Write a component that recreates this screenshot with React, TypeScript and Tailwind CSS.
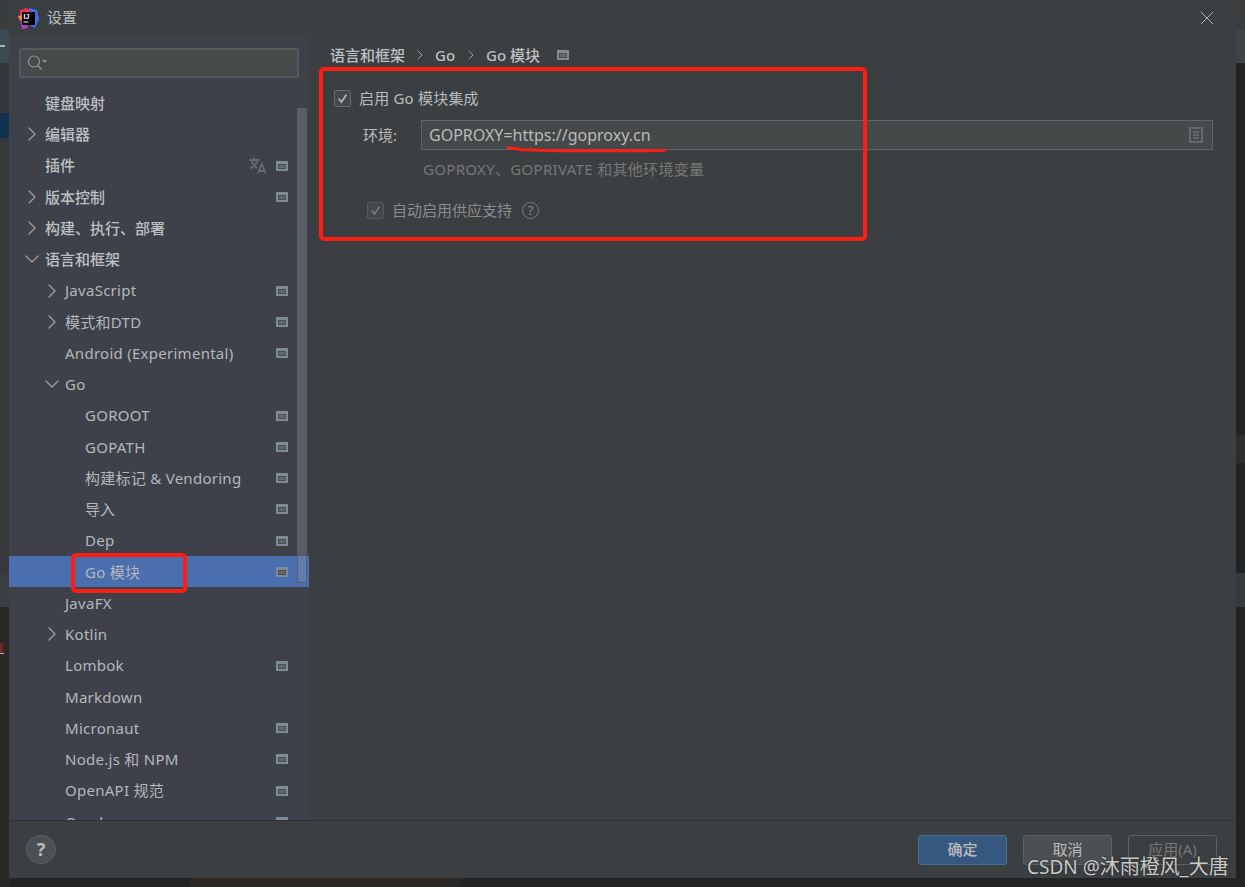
import React from "react";
import { ChevronRight, ChevronDown, X } from "lucide-react";

const font = { fontFamily: '"Noto Sans","Noto Sans CJK SC",sans-serif' };

function PageIcon() {
  return (
    <svg width="12" height="10" viewBox="0 0 12 10" className="shrink-0">
      <rect width="12" height="10" fill="#7f8b94" />
      <rect x="2" y="3" width="8" height="5" fill="#4a4e55" />
      <rect x="3" y="4" width="6" height="3" fill="#5f6970" />
    </svg>
  );
}

type Row = { t: string; level: number; arrow?: "r" | "d"; icon?: boolean; strong?: boolean; sel?: boolean; tr?: boolean };
const rows: Row[] = [
  { t: "键盘映射", level: 0, strong: true },
  { t: "编辑器", level: 0, arrow: "r", strong: true },
  { t: "插件", level: 0, icon: true, strong: true, tr: true },
  { t: "版本控制", level: 0, arrow: "r", icon: true, strong: true },
  { t: "构建、执行、部署", level: 0, arrow: "r", strong: true },
  { t: "语言和框架", level: 0, arrow: "d", strong: true },
  { t: "JavaScript", level: 1, arrow: "r", icon: true },
  { t: "模式和DTD", level: 1, arrow: "r", icon: true },
  { t: "Android (Experimental)", level: 1, icon: true },
  { t: "Go", level: 1, arrow: "d" },
  { t: "GOROOT", level: 2, icon: true },
  { t: "GOPATH", level: 2, icon: true },
  { t: "构建标记 & Vendoring", level: 2, icon: true },
  { t: "导入", level: 2, icon: true },
  { t: "Dep", level: 2, icon: true },
  { t: "Go 模块", level: 2, icon: true, sel: true },
  { t: "JavaFX", level: 1 },
  { t: "Kotlin", level: 1, arrow: "r" },
  { t: "Lombok", level: 1, icon: true },
  { t: "Markdown", level: 1 },
  { t: "Micronaut", level: 1, icon: true },
  { t: "Node.js 和 NPM", level: 1, icon: true },
  { t: "OpenAPI 规范", level: 1, icon: true },
  { t: "Oracle", level: 1, icon: true },
];

const indent = ["pl-[36px]", "pl-[56px]", "pl-[76px]"];
const arrowPos = ["left-[11px]", "left-[31px]", "left-[51px]"];

function TreeRow({ r }: { r: Row }) {
  const hasLatin = /[A-Za-z]/.test(r.t);
  return (
    <div
      className={`relative flex h-[31.25px] shrink-0 items-center pr-[21px] text-[15px] ${indent[r.level]} ${
        r.sel ? "bg-[#4b6eaf]" : ""
      } ${r.strong ? "font-medium text-[#bcc0c4]" : "text-[#b4b8bc]"} ${hasLatin ? "tracking-[0.27px]" : ""}`}
    >
      {r.arrow === "r" && <ChevronRight size={24} strokeWidth={1.2} className={`absolute text-[#a0a4a8] ${arrowPos[r.level]}`} />}
      {r.arrow === "d" && <ChevronDown size={24} strokeWidth={1.2} className={`absolute text-[#a0a4a8] ${arrowPos[r.level]}`} />}
      <span className="flex-1 whitespace-nowrap">{r.t}</span>
      {r.tr && (
        <svg width="18" height="17" viewBox="0 0 18 17" className="mr-[9px] shrink-0" fill="none" stroke="#646a72" strokeWidth="1.8">
          <path d="M0.5 3h10M5 .5V3M8.5 3C7.5 7 4.5 10 .8 11.5M2.5 3.5c1 3 3 6 5.5 7.5" />
          <path d="M9 16.5 12.8 7l3.9 9.5M10 14h5.5" />
        </svg>
      )}
      {r.icon && <PageIcon />}
    </div>
  );
}

function Logo() {
  return (
    <svg width="21" height="21" viewBox="0 0 21 21" className="mt-[2px] shrink-0">
      <path d="M2 2 9 0l4 4-6 6-5-1z" fill="#fe2857" />
      <path d="M11 0l8 2 2 9-4 9-6-3z" fill="#3b6fe8" />
      <path d="M0 8l4-1 1 5-3 1z" fill="#ff8a1c" />
      <path d="M2 12l5-2 3 10-6 1z" fill="#b53dc6" />
      <rect x="4" y="4" width="13" height="13" fill="#000" />
      <text x="5.5" y="10.5" fill="#fff" fontSize="7" fontWeight="700" fontFamily="Liberation Sans">IJ</text>
      <rect x="5.5" y="13.5" width="5" height="1" fill="#fff" />
    </svg>
  );
}

function Check({ disabled }: { disabled?: boolean }) {
  return (
    <span
      className={`flex h-[17px] w-[17px] shrink-0 items-center justify-center rounded-[2px] border ${
        disabled ? "border-[#565a5c] bg-[#45484a]" : "border-[#6b6b6b] bg-[#43494a]"
      }`}
    >
      <svg width="11" height="11" viewBox="0 0 11 11" fill="none" stroke={disabled ? "#777" : "#b4b4b4"} strokeWidth="1.8">
        <path d="M1.5 5.5 4.5 9 9.5 1.5" />
      </svg>
    </span>
  );
}

function Sep() {
  return <ChevronRight size={16} strokeWidth={1.5} className="text-[#a0a4a8]" />;
}

export default function App() {
  return (
    <div className="relative flex h-[887px] w-[1245px] overflow-hidden bg-[#212325]" style={font}>
      {/* left strip of the IDE behind the dialog */}
      <div className="flex w-[9px] shrink-0 flex-col">
        <div className="h-[29px] bg-[#3a3c3e]" />
        <div className="flex h-[34px] items-center bg-[#3c4a55]">
          <div className="h-[2px] w-[5px] bg-[#b0b4b8]" />
        </div>
        <div className="h-[50px] bg-[#35373a]" />
        <div className="h-[25px] bg-[#10324f]" />
        <div className="h-[435px] bg-[#36383a]" />
        <div className="h-[34px] bg-[#3c3f41]" />
        <div className="h-[280px] bg-[#2b2926] pt-[36px]">
          <div className="h-[10px] w-[3px] bg-[#7a2420]" />
          <div className="h-[1px] w-[4px] bg-[#b0b0b0]" />
        </div>
      </div>

      <div className="flex w-[1227px] shrink-0 flex-col">
        <div className="flex h-[878px] flex-col bg-[#3c3f41]">
          <div className="flex h-[35px] shrink-0 items-center pl-[9px] pr-[17px] text-[#bbbbbb]">
            <Logo />
            <span className="ml-[8px] flex-1 text-[15px]">设置</span>
            <X size={24} strokeWidth={1} className="text-[#b0b0b0]" />
          </div>

          <div className="flex min-h-0 flex-1">
            <aside className="relative flex w-[300px] shrink-0 flex-col overflow-hidden bg-[#3e4149]">
              <div className="mx-[10px] mb-[9.4px] mt-[13px] flex h-[30px] shrink-0 items-center rounded-[3px] border-2 border-[#565a5c] bg-[#474a4a] pl-[6px]">
                <svg width="20" height="16" viewBox="0 0 20 16" fill="none" stroke="#8f9396" strokeWidth="1.2">
                  <circle cx="7" cy="6.5" r="5.5" />
                  <path d="M11 10.5 14.5 14.5" />
                  <path d="M15 5h5l-2.5 3z" fill="#8f9396" stroke="none" />
                </svg>
              </div>
              <div className="flex min-h-0 flex-1 flex-col overflow-hidden">
                {rows.map((r) => (
                  <TreeRow key={r.t} r={r} />
                ))}
              </div>
              {/* overlay scrollbar */}
              <div className="absolute left-[288px] top-[73px] h-[475px] w-[10px] border border-[#5a5d66] bg-[#9aa0aa]/30" />
            </aside>

            <main className="min-w-0 flex-1 pl-[21px] pr-[23px] text-[#bbbbbb]">
              <div className="mt-[8px] flex h-[24px] items-center text-[15px] font-medium text-[#bcc0c4]">
                <span>语言和框架</span>
                <span className="mx-[7px] flex"><Sep /></span>
                <span>Go</span>
                <span className="mx-[7.5px] flex"><Sep /></span>
                <span>Go 模块</span>
                <span className="ml-[17px] flex"><PageIcon /></span>
              </div>
              <div className="mt-[19px] flex h-[24px] items-center pl-[4px] text-[15px] tracking-[0.2px]">
                <Check />
                <span className="ml-[8px]">启用 Go 模块集成</span>
              </div>
              <div className="mt-[10px] flex h-[30px] items-center pl-[33px] text-[15px]">
                <span className="w-[58px]">环境:</span>
                <div className="flex h-[30px] flex-1 items-center justify-between border border-[#646464] bg-[#45494a] pl-[7px] pr-[9px]">
                  <span className="text-[16px]">GOPROXY=https://goproxy.cn</span>
                  <svg width="14" height="16" viewBox="0 0 14 16">
                    <rect width="14" height="16" fill="#5d6b75" />
                    <rect x="2" y="2" width="10" height="12" fill="#45494a" />
                    <path d="M4 5h6M4 8h6M4 11h6" stroke="#7f8b94" strokeWidth="1.2" />
                  </svg>
                </div>
              </div>
              <div className="mt-[8px] pl-[93px] text-[15px] leading-[22px] tracking-[0.32px] text-[#787878]">GOPROXY、GOPRIVATE 和其他环境变量</div>
              <div className="mt-[18px] flex h-[24px] items-center pl-[37px] text-[15px] text-[#8c8c8c]">
                <Check disabled />
                <span className="ml-[8px]">自动启用供应支持</span>
                <span className="ml-[10px] flex h-[17px] w-[17px] items-center justify-center rounded-full border border-[#7d7d7d] text-[13px] leading-none">?</span>
              </div>
            </main>
          </div>

          <div className="flex h-[58px] shrink-0 items-center justify-between border-t border-[#323232] pl-[17px] pr-[19px]">
            <span className="flex h-[29px] w-[30px] items-center justify-center rounded-full border border-[#5e6060] bg-[#4c5052] text-[18px] font-bold text-[#bbbbbb]">?</span>
            <div className="flex gap-[16px] text-[15px]">
              <button className="h-[30px] w-[89px] rounded-[3px] border border-[#4c708c] bg-[#365880] font-medium text-[#bbbbbb]">确定</button>
              <button className="h-[30px] w-[89px] rounded-[3px] border border-[#5e6060] bg-[#4c5052] text-[#bbbbbb]">取消</button>
              <button className="h-[30px] w-[89px] rounded-[3px] border border-[#5e6060] text-[#777777]">应用(A)</button>
            </div>
          </div>
        </div>
        {/* strip below the dialog */}
        <div className="flex h-[9px] shrink-0">
          <div className="w-[181px] bg-[#212325]" />
          <div className="w-[270px] bg-[#2b2826]" />
        </div>
      </div>

      {/* right strip */}
      <div className="flex w-[9px] shrink-0 flex-col">
        <div className="h-[30px] bg-[#3a3c3e]" />
        <div className="h-[33px] bg-[#414446]" />
        <div className="h-[372px] bg-[#212325]" />
        <div className="h-[28px] bg-[#2b2d2f]" />
        <div className="h-[110px] bg-[#212325]" />
        <div className="h-[34px] bg-[#363a3c]" />
      </div>

      {/* red annotations drawn over the shot */}
      <div className="pointer-events-none absolute left-[319px] top-[67px] h-[174px] w-[548px] rounded-[5px] border-4 border-[#fb1f13]" />
      <div className="pointer-events-none absolute left-[71px] top-[553px] h-[40px] w-[116px] rounded-[5px] border-4 border-[#fb1f13]" />
      <svg className="pointer-events-none absolute left-[505px] top-[140px]" width="162" height="14" viewBox="0 0 162 14" fill="none" stroke="#fb1f13" strokeWidth="3" strokeLinecap="round">
        <path d="M3 8c4-.5 7 .5 12 1.5 20 1.5 90 1.5 144 1" />
      </svg>

      {/* watermark */}
      <div className="pointer-events-none absolute left-[1027px] top-[853px] whitespace-nowrap text-[19px] leading-[28px] text-[#c9c9c9] [text-shadow:0_0_2px_#222]">
        CSDN @<span className="text-[20px]">沐雨橙风_大唐</span>
      </div>
    </div>
  );
}
